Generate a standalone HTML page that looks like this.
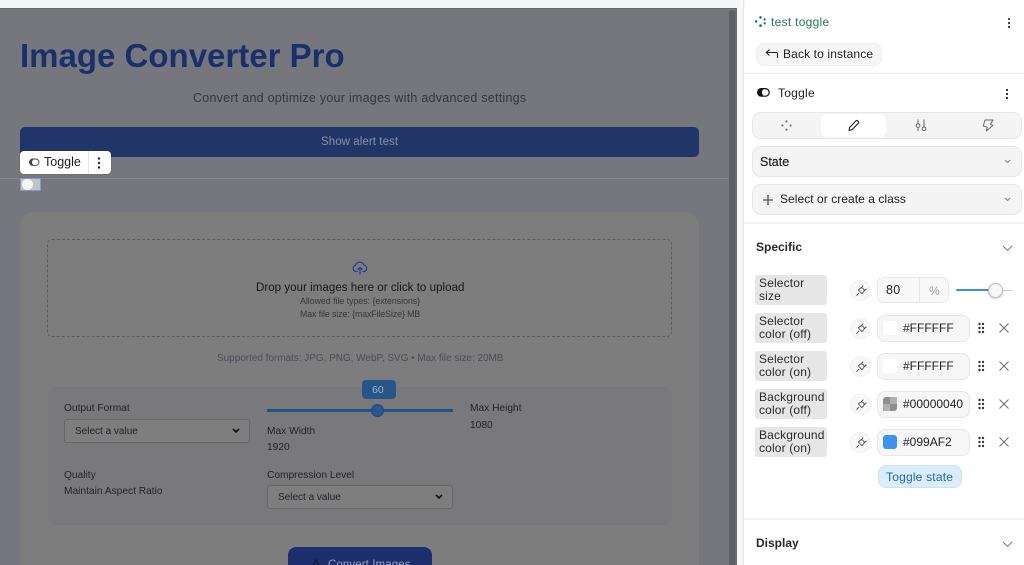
<!DOCTYPE html>
<html><head><meta charset="utf-8">
<style>
*{box-sizing:border-box;margin:0;padding:0}
html,body{width:1024px;height:565px;overflow:hidden;background:#fff}
body{font-family:"Liberation Sans",sans-serif;position:relative}
.a{position:absolute;white-space:nowrap}
.t{position:absolute;white-space:nowrap;line-height:1}
svg{position:absolute;overflow:visible}
.lbl{position:absolute;left:755px;width:72px;height:30px;background:#e6e6e6;border-radius:3px;font-size:12px;line-height:13px;padding:2px 0 0 4px;color:#2a2a2a;letter-spacing:.15px}
.plug{position:absolute;left:850px;width:21px;height:21px;border-radius:50%;background:#f8f8f8;border:1px solid #f0f0f0}
.col{position:absolute;left:877px;width:93px;height:27px;border-radius:8px;background:#f6f6f6;border:1px solid #e6e6e6;font-size:12px;line-height:25px;padding-left:25px;color:#222;overflow:hidden}
.sw{position:absolute;left:5px;top:5px;width:14px;height:14px;border-radius:3px;background:#fff}
.sel{position:absolute;border:1px solid #666;border-radius:3px;background:#7e7e7e;width:186px;height:24px;font-size:10px;color:#1e2128;line-height:24px;padding-left:10px}
.dark{color:#1f2229;font-size:10.2px}
.box{position:absolute;left:752px;width:270px;background:#f4f4f4;border:1px solid #e6e6e6;border-radius:9px}
</style></head><body>

<!-- canvas -->
<div class="a" style="left:0;top:0;width:745px;height:9px;background:#f5f5f5"></div>
<div class="a" style="left:0;top:8px;width:737px;height:557px;background:#76777d;border-top:1px solid #66676b"></div>
<div class="a" style="left:729px;top:10px;width:6px;height:555px;background:#5e5f63;border-radius:3px 3px 0 0"></div>
<div class="a" style="left:735px;top:9px;width:2px;height:556px;background:#6b6c70"></div>
<div class="a" style="left:737px;top:0;width:7px;height:565px;background:#f7f7f7"></div>
<div class="a" style="left:743px;top:0;width:1px;height:565px;background:#e5e5e5"></div>

<div class="t" style="left:20px;top:39px;font-size:33px;font-weight:700;color:#18306c">Image Converter Pro</div>
<div class="t" style="left:193px;top:92px;font-size:12.5px;color:#33363f;letter-spacing:.25px">Convert and optimize your images with advanced settings</div>

<div class="a" style="left:20px;top:127px;width:679px;height:30px;background:#213668;border-radius:5px"></div>
<div class="t" style="left:321px;top:137px;font-size:11.5px;color:#8b8f9b;letter-spacing:.07px">Show alert test</div>

<div class="a" style="left:0;top:178px;width:729px;height:1px;background:#84858a"></div>

<!-- main card -->
<div class="a" style="left:20px;top:212px;width:679px;height:353px;background:#7d7d7d;border-radius:14px 14px 0 0"></div>
<div class="a" style="left:47px;top:239px;width:625px;height:98px;border:1px dashed #5c5c5c;border-radius:5px"></div>
<svg style="left:352px;top:259px" width="16" height="16" viewBox="0 0 16 16" fill="none" stroke="#1f3f90" stroke-width="1.2" stroke-linecap="round" stroke-linejoin="round"><path d="M5 12.5H4.3A3.2 3.2 0 0 1 3.6 6.2 4.4 4.4 0 0 1 12 6.2 3.2 3.2 0 0 1 12.2 12.5H11"/><path d="M8 15V8.5M5.8 10.6 8 8.4l2.2 2.2"/></svg>
<div class="t" style="left:256px;top:282.5px;font-size:11.5px;color:#14161a;letter-spacing:.05px">Drop your images here or click to upload</div>
<div class="t" style="left:300px;top:297px;font-size:8.75px;color:#34363b">Allowed file types: {extensions}</div>
<div class="t" style="left:300px;top:310px;font-size:8.75px;color:#34363b;letter-spacing:-.06px">Max file size: {maxFileSize} MB</div>
<div class="t" style="left:217px;top:353.5px;font-size:10px;color:#4b4e58;letter-spacing:-.03px">Supported formats: JPG, PNG, WebP, SVG • Max file size: 20MB</div>

<!-- settings panel -->
<div class="a" style="left:48px;top:387px;width:624px;height:138px;background:#79797b;border-radius:9px"></div>
<div class="t dark" style="left:64px;top:404px">Output Format</div>
<div class="sel" style="left:64px;top:419px">Select a value</div>
<svg style="left:232px;top:428px" width="8" height="6" viewBox="0 0 8 6" fill="none" stroke="#111" stroke-width="1.6"><path d="M1 1l3 3 3-3"/></svg>

<div class="a" style="left:362px;top:380px;width:34px;height:19px;background:#275588;border-radius:4px"></div>
<div class="t" style="left:372px;top:385px;font-size:10.5px;color:#9fb4cc">60</div>
<div class="a" style="left:267px;top:409px;width:186px;height:3px;background:#26528a"></div>
<div class="a" style="left:371px;top:404px;width:13px;height:13px;border-radius:50%;background:#26588e;border:1px solid #214a78"></div>
<div class="t dark" style="left:267px;top:427px">Max Width</div>
<div class="t dark" style="left:267px;top:443px">1920</div>
<div class="t dark" style="left:470px;top:404px">Max Height</div>
<div class="t dark" style="left:470px;top:421px">1080</div>
<div class="t dark" style="left:64px;top:471px">Quality</div>
<div class="t dark" style="left:64px;top:487px">Maintain Aspect Ratio</div>
<div class="t dark" style="left:267px;top:471px">Compression Level</div>
<div class="sel" style="left:267px;top:485px">Select a value</div>
<svg style="left:435px;top:494px" width="8" height="6" viewBox="0 0 8 6" fill="none" stroke="#111" stroke-width="1.6"><path d="M1 1l3 3 3-3"/></svg>

<div class="a" style="left:288px;top:547px;width:144px;height:30px;background:#1b2e6e;border-radius:8px"></div>
<svg style="left:310px;top:559px" width="12" height="12" viewBox="0 0 12 12" fill="none" stroke="#10152c" stroke-width="1.1"><path d="M6 1 1 10h10z"/></svg>
<div class="t" style="left:328px;top:559.5px;font-size:11.5px;color:#9aa3c2;letter-spacing:.1px">Convert Images</div>

<!-- floating toolbar -->
<div class="a" style="left:20px;top:151px;width:91px;height:23px;background:#fff;border-radius:4px;box-shadow:0 0 0 1px rgba(0,0,0,.06)"></div>
<div class="a" style="left:88px;top:151px;width:1px;height:23px;background:#e4e4e4"></div>
<svg style="left:29px;top:158px" width="11" height="9" viewBox="0 0 11 9"><rect x=".5" y="1" width="9.5" height="6.4" rx="3.2" fill="#fff" stroke="#444" stroke-width=".9"/><path d="M3.7 1A3.2 3.2 0 0 0 3.7 7.4H6.2A3.2 3.2 0 0 1 6.2 1z" fill="#444"/></svg>
<div class="t" style="left:44px;top:156px;font-size:12.5px;color:#1c1c1c">Toggle</div>
<svg style="left:97px;top:157px" width="4" height="12" viewBox="0 0 4 12" fill="#222"><circle cx="2" cy="1.5" r="1.2"/><circle cx="2" cy="6" r="1.2"/><circle cx="2" cy="10.5" r="1.2"/></svg>
<div class="a" style="left:21px;top:179px;width:19px;height:11px;background:#c2c2c2;outline:1px solid #6f9fdc"></div>
<div class="a" style="left:21.5px;top:179px;width:11px;height:11px;border-radius:50%;background:#f6f6f6"></div>

<!-- right panel -->
<svg style="left:755px;top:16px" width="11" height="11" viewBox="0 0 11 11" fill="#13724a"><circle cx="5.5" cy="1.4" r="1.3"/><circle cx="5.5" cy="9.6" r="1.3"/><circle cx="1.2" cy="5.5" r="1.2"/><circle cx="9.7" cy="3.4" r="1.1"/><circle cx="9.7" cy="7.4" r="1.1"/></svg>
<div class="t" style="left:771px;top:16px;font-size:12px;color:#1f7a50;letter-spacing:.28px">test toggle</div>
<svg style="left:1007px;top:17.5px" width="4" height="10" viewBox="0 0 4 10" fill="#333"><circle cx="2" cy="1" r="1.1"/><circle cx="2" cy="5" r="1.1"/><circle cx="2" cy="9" r="1.1"/></svg>

<div class="a" style="left:756px;top:43px;width:126px;height:23px;border-radius:8px;background:#f6f6f6;border:1px solid #efefef"></div>
<svg style="left:765px;top:48px" width="14" height="13" viewBox="0 0 14 13" fill="none" stroke="#222" stroke-width="1.1"><path d="M4.5 1.5 1.3 4.5l3.2 3"/><path d="M1.5 4.5H11.5a1 1 0 0 1 1 1V10"/></svg>
<div class="t" style="left:783px;top:47.5px;font-size:12px;color:#222;letter-spacing:.13px">Back to instance</div>
<div class="a" style="left:744px;top:73px;width:280px;height:1px;background:#ececec"></div>

<svg style="left:757px;top:88px" width="13" height="9" viewBox="0 0 13 9"><rect x=".6" y=".6" width="11.6" height="7.6" rx="3.8" fill="#fff" stroke="#111" stroke-width="1.2"/><path d="M4.4.6A3.8 3.8 0 0 0 4.4 8.2H7A4.6 4.6 0 0 1 7 .6z" fill="#111"/></svg>
<div class="t" style="left:778px;top:87px;font-size:12px;color:#222;letter-spacing:.25px">Toggle</div>
<svg style="left:1005px;top:89px" width="4" height="10" viewBox="0 0 4 10" fill="#222"><circle cx="2" cy="1" r="1.1"/><circle cx="2" cy="5" r="1.1"/><circle cx="2" cy="9" r="1.1"/></svg>

<div class="box" style="top:112px;height:27px"></div>
<div class="a" style="left:821px;top:114px;width:65px;height:23px;background:#fff;border-radius:6px"></div>
<svg style="left:781px;top:120px" width="11" height="11" viewBox="0 0 11 11" fill="#777"><circle cx="5.5" cy="1.4" r="1.1"/><circle cx="5.5" cy="9.6" r="1.1"/><circle cx="1.4" cy="5.5" r="1.1"/><circle cx="9.6" cy="5.5" r="1.1"/></svg>
<svg style="left:847px;top:119px" width="13" height="13" viewBox="0 0 13 13" fill="none" stroke="#222" stroke-width="1.1" stroke-linejoin="round"><path d="M2 11.4l.7-3L9 1.8a1 1 0 0 1 1.5 0l.9.9a1 1 0 0 1 0 1.5L5 10.6z"/></svg>
<svg style="left:915px;top:118px" width="12" height="14" viewBox="0 0 12 14" fill="none" stroke="#666" stroke-width="1"><path d="M3 1.5v4M3 10v3M9 1.5v7.5M9 12.5v.5"/><circle cx="3" cy="7.6" r="1.9"/><circle cx="9" cy="10.8" r="1.8"/></svg>
<svg style="left:982px;top:118px" width="12" height="14" viewBox="0 0 12 14" fill="none" stroke="#666" stroke-width="1" stroke-linejoin="round"><path d="M3 2h8L8.4 6.2l2.4 1.3L4.3 13l.9-3.8L1.3 8z"/></svg>

<div class="box" style="top:146px;height:31px"></div>
<div class="t" style="left:760px;top:155.5px;font-size:12.5px;color:#222;-webkit-text-stroke:.2px #222">State</div>
<svg style="left:1004px;top:159px" width="7" height="5" viewBox="0 0 7 5" fill="none" stroke="#888" stroke-width="1"><path d="M1 1l2.5 2.5L6 1"/></svg>

<div class="box" style="top:184px;height:31px"></div>
<svg style="left:762px;top:194px" width="12" height="12" viewBox="0 0 12 12" fill="none" stroke="#333" stroke-width="1.1"><path d="M6 1v10M1 6h10"/></svg>
<div class="t" style="left:780px;top:193px;font-size:12px;color:#222;letter-spacing:.05px">Select or create a class</div>
<svg style="left:1004px;top:197px" width="7" height="5" viewBox="0 0 7 5" fill="none" stroke="#888" stroke-width="1"><path d="M1 1l2.5 2.5L6 1"/></svg>

<div class="a" style="left:744px;top:222px;width:280px;height:2px;background:#f1f1f1"></div>
<div class="t" style="left:756px;top:241px;font-size:12px;font-weight:700;color:#2a2a2a">Specific</div>
<svg style="left:1002px;top:245px" width="11" height="7" viewBox="0 0 11 7" fill="none" stroke="#777" stroke-width=".9"><path d="M1 1l4.5 4.5L10 1"/></svg>

<!-- rows -->
<div class="lbl" style="top:275px">Selector<br>size</div>
<div class="lbl" style="top:313px">Selector<br>color (off)</div>
<div class="lbl" style="top:351px">Selector<br>color (on)</div>
<div class="lbl" style="top:389px">Background<br>color (off)</div>
<div class="lbl" style="top:427px">Background<br>color (on)</div>

<div class="plug" style="top:280px"></div>
<div class="plug" style="top:318px"></div>
<div class="plug" style="top:356px"></div>
<div class="plug" style="top:394px"></div>
<div class="plug" style="top:432px"></div>
<svg style="left:855.500px;top:285px" width="11" height="11" viewBox="0 0 11 11" fill="none" stroke="#444" stroke-width=".85" stroke-linecap="round"><path d="M.6 10.400 3 8M2.400 5 6 8.600l1.100-1.100c1.300-1.300 1.300-2.700.2-3.800S4.800 2.600 3.500 3.900zM5 3 7 .8M8 6 10.200 4"/></svg>
<svg style="left:855.500px;top:323px" width="11" height="11" viewBox="0 0 11 11" fill="none" stroke="#444" stroke-width=".85" stroke-linecap="round"><path d="M.6 10.400 3 8M2.400 5 6 8.600l1.100-1.100c1.300-1.300 1.300-2.700.2-3.800S4.800 2.600 3.500 3.900zM5 3 7 .8M8 6 10.200 4"/></svg>
<svg style="left:855.500px;top:361px" width="11" height="11" viewBox="0 0 11 11" fill="none" stroke="#444" stroke-width=".85" stroke-linecap="round"><path d="M.6 10.400 3 8M2.400 5 6 8.600l1.100-1.100c1.300-1.300 1.300-2.700.2-3.800S4.800 2.600 3.500 3.900zM5 3 7 .8M8 6 10.200 4"/></svg>
<svg style="left:855.500px;top:399px" width="11" height="11" viewBox="0 0 11 11" fill="none" stroke="#444" stroke-width=".85" stroke-linecap="round"><path d="M.6 10.400 3 8M2.400 5 6 8.600l1.100-1.100c1.300-1.300 1.300-2.700.2-3.800S4.800 2.600 3.500 3.900zM5 3 7 .8M8 6 10.200 4"/></svg>
<svg style="left:855.500px;top:437px" width="11" height="11" viewBox="0 0 11 11" fill="none" stroke="#444" stroke-width=".85" stroke-linecap="round"><path d="M.6 10.400 3 8M2.400 5 6 8.600l1.100-1.100c1.300-1.300 1.300-2.700.2-3.800S4.800 2.600 3.500 3.900zM5 3 7 .8M8 6 10.200 4"/></svg>

<div class="a" style="left:877px;top:277px;width:72px;height:26px;background:#f8f8f8;border:1px solid #e8e8e8;border-radius:7px"></div>
<div class="a" style="left:919px;top:278px;width:1px;height:24px;background:#e6e6e6"></div>
<div class="t" style="left:886px;top:284px;font-size:12.5px;color:#222;letter-spacing:.3px">80</div>
<div class="t" style="left:929px;top:284.500px;font-size:12px;color:#999">%</div>
<div class="a" style="left:956px;top:289px;width:36px;height:2px;background:#3d8bea;border-radius:1px"></div>
<div class="a" style="left:998px;top:289.500px;width:14px;height:1px;background:#ccc"></div>
<div class="a" style="left:988px;top:282.500px;width:15px;height:15px;border-radius:50%;background:#f7f7f7;border:1px solid #bbb;box-shadow:0 1px 2px rgba(0,0,0,.2)"></div>

<div class="col" style="top:315px"><span class="sw"></span>#FFFFFF</div>
<div class="col" style="top:353px"><span class="sw"></span>#FFFFFF</div>
<div class="col" style="top:391px"><span class="sw" style="background:#8f8f8f"><span class="a" style="left:7px;top:0;width:7px;height:7px;background:#b0b0b0"></span><span class="a" style="left:0;top:7px;width:7px;height:7px;background:#b0b0b0"></span></span>#00000040</div>
<div class="col" style="top:429px"><span class="sw" style="background:#3d93ee"></span>#099AF2</div>

<svg style="left:978px;top:323px" width="8" height="11" viewBox="0 0 8 11" fill="#333"><circle cx="1.500" cy="1" r="1.200"/><circle cx="5" cy="1" r="1.200"/><circle cx="1.500" cy="5" r="1.200"/><circle cx="5" cy="5" r="1.200"/><circle cx="1.500" cy="9" r="1.200"/><circle cx="5" cy="9" r="1.200"/></svg>
<svg style="left:978px;top:361px" width="8" height="11" viewBox="0 0 8 11" fill="#333"><circle cx="1.500" cy="1" r="1.200"/><circle cx="5" cy="1" r="1.200"/><circle cx="1.500" cy="5" r="1.200"/><circle cx="5" cy="5" r="1.200"/><circle cx="1.500" cy="9" r="1.200"/><circle cx="5" cy="9" r="1.200"/></svg>
<svg style="left:978px;top:399px" width="8" height="11" viewBox="0 0 8 11" fill="#333"><circle cx="1.500" cy="1" r="1.200"/><circle cx="5" cy="1" r="1.200"/><circle cx="1.500" cy="5" r="1.200"/><circle cx="5" cy="5" r="1.200"/><circle cx="1.500" cy="9" r="1.200"/><circle cx="5" cy="9" r="1.200"/></svg>
<svg style="left:978px;top:437px" width="8" height="11" viewBox="0 0 8 11" fill="#333"><circle cx="1.500" cy="1" r="1.200"/><circle cx="5" cy="1" r="1.200"/><circle cx="1.500" cy="5" r="1.200"/><circle cx="5" cy="5" r="1.200"/><circle cx="1.500" cy="9" r="1.200"/><circle cx="5" cy="9" r="1.200"/></svg>

<svg style="left:999px;top:323px" width="10" height="10" viewBox="0 0 10 10" fill="none" stroke="#666" stroke-width=".9"><path d="M.5.5l9 9M9.5.5l-9 9"/></svg>
<svg style="left:999px;top:361px" width="10" height="10" viewBox="0 0 10 10" fill="none" stroke="#666" stroke-width=".9"><path d="M.5.5l9 9M9.5.5l-9 9"/></svg>
<svg style="left:999px;top:399px" width="10" height="10" viewBox="0 0 10 10" fill="none" stroke="#666" stroke-width=".9"><path d="M.5.5l9 9M9.5.5l-9 9"/></svg>
<svg style="left:999px;top:437px" width="10" height="10" viewBox="0 0 10 10" fill="none" stroke="#666" stroke-width=".9"><path d="M.5.5l9 9M9.5.5l-9 9"/></svg>

<div class="a" style="left:878px;top:465px;width:84px;height:23px;background:#d9edfb;border:1px solid #c5e2f6;border-radius:8px"></div>
<div class="t" style="left:886px;top:470.500px;font-size:12px;color:#1f66b0;letter-spacing:.2px">Toggle state</div>

<div class="a" style="left:744px;top:518px;width:280px;height:2px;background:#f1f1f1"></div>
<div class="t" style="left:756px;top:537px;font-size:12px;font-weight:700;color:#2a2a2a">Display</div>
<svg style="left:1002px;top:541px" width="11" height="7" viewBox="0 0 11 7" fill="none" stroke="#777" stroke-width=".9"><path d="M1 1l4.5 4.5L10 1"/></svg>

</body></html>
